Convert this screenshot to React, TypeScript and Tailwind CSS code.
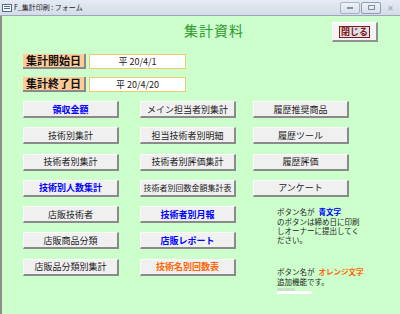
import React from 'react';

const jp = { fontFamily: '"MS PGothic", "Noto Sans CJK JP", sans-serif' };

type Btn = { label: string; tone?: 'blue' | 'orange' };

const rows: (Btn | null)[][] = [
  [{ label: '領収金額', tone: 'blue' }, { label: 'メイン担当者別集計' }, { label: '履歴推奨商品' }],
  [{ label: '技術別集計' }, { label: '担当技術者別明細' }, { label: '履歴ツール' }],
  [{ label: '技術者別集計' }, { label: '技術者別評価集計' }, { label: '履歴評価' }],
  [{ label: '技術別人数集計', tone: 'blue' }, { label: '技術者別回数金額集計表' }, { label: 'アンケート' }],
  [{ label: '店販技術者' }, { label: '技術者別月報', tone: 'blue' }, null],
  [{ label: '店販商品分類' }, { label: '店販レポート', tone: 'blue' }, null],
  [{ label: '店販品分類別集計' }, { label: '技術名別回数表', tone: 'orange' }, null],
];

function FormButton({ label, tone }: Btn) {
  const color =
    tone === 'blue' ? 'text-[#0000ff] font-bold' : tone === 'orange' ? 'text-[#ff6600] font-bold' : 'text-[#222]';
  const size = label.length > 10 ? 'text-[8px]' : 'text-[9px]';
  return (
    <div
      className={`w-[96px] h-[17px] flex items-center justify-center whitespace-nowrap bg-[#f0f0f0] border-t border-l border-[#fafafa] border-r-2 border-b-2 border-r-[#8a8a8a] border-b-[#8a8a8a] leading-none ${size} ${color}`}
    >
      {label}
    </div>
  );
}

export default function App() {
  return (
    <div className="w-[400px] h-[314px] overflow-hidden flex flex-col bg-[#ccffcc]" style={jp}>
      {/* title bar */}
      <div className="h-[16px] flex items-center bg-gradient-to-b from-[#e4ebf4] to-[#d3dce8] border-b border-[#9aa8b8]">
        <div className="ml-[2px] w-[10px] h-[8px] border border-[#4a6a9a] bg-white flex flex-col gap-[1px] p-[1px]">
          <div className="h-[1px] bg-[#4a6a9a]" />
          <div className="h-[1px] bg-[#4a6a9a]" />
        </div>
        <span className="ml-[2px] text-[7px] text-[#222] leading-none">F_集計印刷 : フォーム</span>
        <div className="ml-auto mr-[2px] flex gap-[1px]">
          <div className="w-[20px] h-[12px] rounded-[2px] border border-[#a8b4c4] bg-gradient-to-b from-[#eef2f7] to-[#d8e0ea] flex items-center justify-center">
            <div className="w-[6px] h-[2px] bg-[#8090a4]" />
          </div>
          <div className="w-[20px] h-[12px] rounded-[2px] border border-[#8f9db0] bg-gradient-to-b from-[#eef2f7] to-[#d8e0ea] flex items-center justify-center">
            <div className="w-[7px] h-[5px] border border-[#8090a4]" />
          </div>
          <div className="w-[16px] h-[12px] flex items-center justify-center text-[8px] text-[#9aa4b0] leading-none">✕</div>
        </div>
      </div>

      <div className="flex-1 flex flex-col border-l-2 border-[#8c8c8c] pl-[21px]">
        {/* header */}
        <div className="h-[32px] flex items-start">
          <div className="ml-[161px] mt-[7px] text-[14px] leading-none text-[#2e9a2e] tracking-[1px]">集計資料</div>
          <div className="ml-auto mr-[22px] mt-[6px] w-[46px] h-[20px] bg-[#f4f4f4] border-t border-l border-white border-r-2 border-b-2 border-r-[#909090] border-b-[#909090] flex items-center justify-center">
            <span className="px-[1px] border border-[#7a1a1a] bg-[#d8e4ea] text-[9px] leading-[10px] font-bold text-[#8a1010]">閉じる</span>
          </div>
        </div>

        {/* dates */}
        <div className="flex flex-col gap-[8px] mt-[6px]">
          {[
            ['集計開始日', '平 20/4/1'],
            ['集計終了日', '平 20/4/20'],
          ].map(([l, v]) => (
            <div key={l} className="flex items-center gap-[3px]">
              <div className="w-[63px] h-[15px] bg-[#ffcc99] border-r-2 border-b-2 border-r-[#8a8a8a] border-b-[#8a8a8a] flex items-center justify-center text-[11px] font-bold leading-none text-[#111]">
                {l}
              </div>
              <div className="w-[97px] h-[15px] bg-white border border-[#f0c870] flex items-center justify-center text-[9px] leading-none text-[#222]">
                {v}
              </div>
            </div>
          ))}
        </div>

        {/* buttons */}
        <div className="mt-[9px] grid grid-cols-[117px_113px_96px] gap-y-[9.3px] relative">
          {rows.map((r, i) =>
            r.map((b, j) => (b ? <FormButton key={`${i}-${j}`} {...b} /> : <div key={`${i}-${j}`} />)),
          )}
          <div className="absolute left-[254px] top-[106px] w-[100px] text-[7.5px] leading-[9px] text-[#222]">
            <div className="flex gap-[4px] whitespace-nowrap">
              <span>ボタン名が</span>
              <span className="text-[#0000ff] font-bold">青文字</span>
            </div>
            <div className="mt-[1px] w-[86px]">のボタンは締め日に印刷しオーナーに提出してください。</div>
            <div className="mt-[23px] flex gap-[4px] whitespace-nowrap leading-[10px]">
              <span>ボタン名が</span>
              <span className="text-[#ff6600] font-bold">オレンジ文字</span>
            </div>
            <div className="leading-[9px]">追加機能です。</div>
            <div className="mt-[1px] w-[35px] text-[4px] leading-[4px] text-[#aaa] border-b-[3px] border-white">20010520</div>
          </div>
        </div>
      </div>
    </div>
  );
}
